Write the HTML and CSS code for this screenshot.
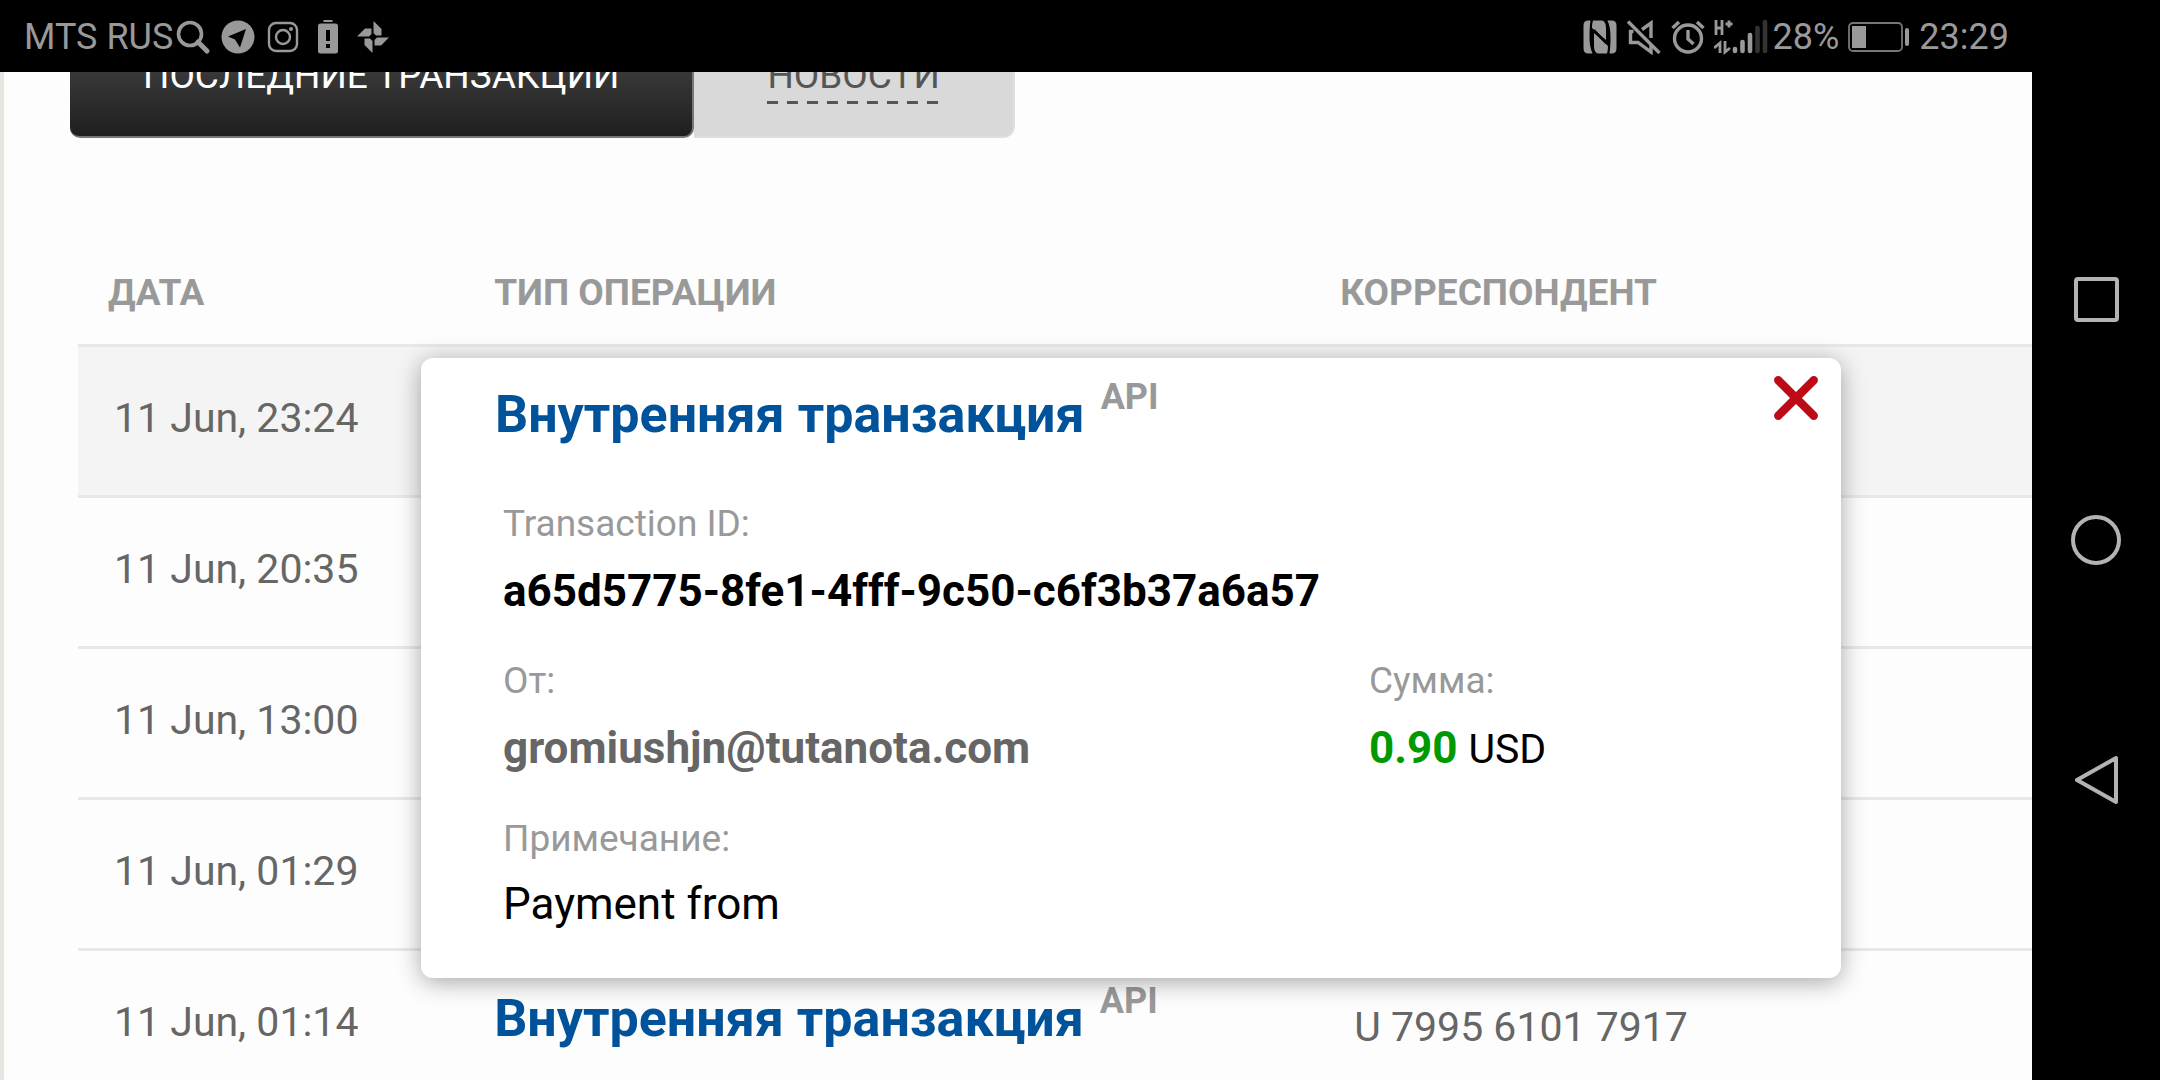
FILE: index.html
```html
<!DOCTYPE html>
<html lang="ru">
<head>
<meta charset="UTF-8">
<meta name="viewport" content="width=device-width, initial-scale=1.0">
<title>Последние транзакции</title>
<link rel="stylesheet" href="styles.css">
</head>
<body>
<div class="screen">
    <header class="status">
        <span>MTS RUS</span>
        <div class="icons left">
            <svg class="icon" viewBox="0 0 36 36"><circle cx="15" cy="15" r="11.5" fill="none" stroke="#999" stroke-width="3.6"/><path d="M23 23L32 32" stroke="#999" stroke-width="5" stroke-linecap="round"/></svg>
            <svg class="icon" viewBox="0 0 36 36"><circle cx="18" cy="18" r="16.5" fill="#999"/><path d="M26 10L8 17.500L15 20.500L20 28.500Z" fill="#000"/></svg>
            <svg class="icon" viewBox="0 0 36 36"><g fill="none" stroke="#999" stroke-width="2.400"><rect x="4" y="4" width="28" height="28" rx="7"/><circle cx="18" cy="18" r="7"/></g><circle cx="26" cy="10" r="2" fill="#999"/></svg>
            <svg class="icon" viewBox="0 0 36 36"><path d="M13.500 1h9v2h-9zM10.500 4.500h15q2.500 0 2.500 2.500v25q0 2.500-2.500 2.500h-15q-2.500 0-2.500-2.500v-25q0-2.500 2.500-2.500z" fill="#999"/><path d="M16 11h4v11h-4zM16 25h4v4h-4z" fill="#000"/></svg>
            <svg class="icon" viewBox="0 0 36 36"><g fill="#999"><path id="leaf" d="M18.500 2L26.500 10V16.500H21L18.500 14Z"/><use href="#leaf" transform="rotate(90 18 18)"/><use href="#leaf" transform="rotate(180 18 18)"/><use href="#leaf" transform="rotate(270 18 18)"/></g></svg>
        </div>
        <div class="icons right">
            <svg class="icon" viewBox="0 0 36 36"><g fill="#999"><path d="M6.500 1.500H8.500Q7.500 8 7.500 18T10.500 34.500H6.500Q1.500 34.500 1.500 29.500V6.500Q1.500 1.500 6.500 1.500Z"/><path d="M29.500 34.500H27.500Q28.500 28 28.500 18T25.500 1.500H29.500Q34.500 1.500 34.500 6.500V29.500Q34.500 34.500 29.500 34.500Z"/><path d="M11 1.500H20Q24 2.500 24 9V21L10 9Q10 4 11 1.500Z"/><path d="M25 34.500H16Q12 33.500 12 27V14L26 27Q26 32 25 34.500Z"/></g><path d="M12 11L24 24" stroke="#000" stroke-width="2"/></svg>
            <svg class="icon" viewBox="0 0 36 36"><g fill="none" stroke="#999" stroke-width="3.400"><path d="M2 2.500L33.500 34"/><path d="M7.500 12.500H4.500V23.500H12L25 33V25M16 10.500L25 4V19"/></g></svg>
            <svg class="icon" viewBox="0 0 36 36"><g fill="none" stroke="#999" stroke-width="3.400"><circle cx="18" cy="19.500" r="13.500"/><path d="M18 11V20L23.500 25M2.500 9L9 3M27 3L33.500 9"/></g></svg>
            <svg class="signal" viewBox="0 0 54 36"><g fill="none" stroke="#999" stroke-width="2.800"><path d="M2 1V16M8 1V16M2 9H8M11.500 5H18.500M15 1.500V8.500M0 29L6 24V34M11 22V33L16 29"/></g><g stroke-width="4.600" stroke-linecap="round"><path d="M21 30V32M28.500 23V32M36 16V32" stroke="#999"/><path d="M43.500 9V32M51 3V32" stroke="#333"/></g></svg>
        </div>
        <span>28%</span>
        <svg class="battery" viewBox="0 0 62 30"><rect x="1" y="1" width="53" height="28" rx="4" fill="none" stroke="#777" stroke-width="1.800"/><rect x="4" y="4" width="14" height="22" fill="#999"/><rect x="57" y="6" width="4" height="18" rx="2" fill="#999"/></svg>
        <time>23:29</time>
    </header>

    <main class="page">
        <nav class="tabs">
            <a class="tab active" href="#">ПОСЛЕДНИЕ ТРАНЗАКЦИИ</a>
            <a class="tab" href="#"><span class="dashed">НОВОСТИ</span></a>
        </nav>
        <table class="operations">
            <thead>
                <tr><th class="date">ДАТА</th><th class="type">ТИП ОПЕРАЦИИ</th><th>КОРРЕСПОНДЕНТ</th></tr>
            </thead>
            <tbody>
                <tr class="selected"><td>11 Jun, 23:24</td><td></td><td></td></tr>
                <tr><td>11 Jun, 20:35</td><td></td><td></td></tr>
                <tr><td>11 Jun, 13:00</td><td></td><td></td></tr>
                <tr><td>11 Jun, 01:29</td><td></td><td></td></tr>
                <tr><td>11 Jun, 01:14</td><td class="operation"><a class="title" href="#">Внутренняя транзакция</a><sup>API</sup></td><td class="account">U 7995 6101 7917</td></tr>
            </tbody>
        </table>

        <section class="popup">
            <button class="close" aria-label="Закрыть"><svg viewBox="0 0 44 44"><path d="M5 5L39 39M39 5L5 39" stroke="#bd0a17" stroke-width="8" stroke-linecap="round"/></svg></button>
            <h2><a class="title" href="#">Внутренняя транзакция</a><sup>API</sup></h2>
            <dl class="details">
                <div class="wide"><dt>Transaction ID:</dt><dd><b>a65d5775-8fe1-4fff-9c50-c6f3b37a6a57</b></dd></div>
                <div><dt>От:</dt><dd class="sender"><b>gromiushjn@tutanota.com</b></dd></div>
                <div><dt>Сумма:</dt><dd><b class="amount">0.90</b> <span class="currency">USD</span></dd></div>
                <div class="wide note"><dt>Примечание:</dt><dd>Payment from</dd></div>
            </dl>
        </section>
    </main>

    <aside class="keys">
        <button aria-label="Недавние"><svg viewBox="0 0 52 52"><rect x="6" y="5" width="41" height="41" rx="2" fill="none" stroke="#b3b3b3" stroke-width="4"/></svg></button>
        <button aria-label="Домой"><svg viewBox="0 0 52 52"><circle cx="26" cy="26" r="23" fill="none" stroke="#b3b3b3" stroke-width="4"/></svg></button>
        <button aria-label="Назад"><svg viewBox="0 0 52 52"><path d="M46 4V48L7 26Z" fill="none" stroke="#b3b3b3" stroke-width="4" stroke-linejoin="round"/></svg></button>
    </aside>
</div>
</body>
</html>
```
FILE: styles.css
```css
*{margin:0;padding:0;box-sizing:border-box;}
body
{
    font-family: Roboto, "Liberation Sans", sans-serif;
    font-size: 41px;
    line-height: 48px;
    color: #000;
    background: #000;
}
a
{
    text-decoration: none;
}
button
{
    border: 0;
    background: none;
}
svg
{
    display: block;
}
.screen
{
    display: grid;
    grid-template-columns: 1fr 128px;
    grid-template-rows: 72px 1fr;
    height: 100vh;
    overflow: hidden;
}

/* status bar */
.status
{
    display: flex;
    align-items: center;
    padding: 2px 23px 0 24px;
    font-size: 36px;
    color: #999;
}
.icons
{
    display: flex;
    gap: 8px;
}
.icons.left
{
    gap: 9px;
    margin-left: 2px;
}
.icons.right
{
    margin-left: auto;
    margin-right: 5px;
}
.icon
{
    width: 36px;
    height: 36px;
}
.signal
{
    width: 54px;
    height: 36px;
}
.battery
{
    width: 62px;
    height: 30px;
    margin: 0 9px;
}

/* page */
.page
{
    position: relative;
    min-width: 0;
    overflow: hidden;
    border-left: 4px solid #e6e6e0;
    background: #fdfdfd;
}
.tabs
{
    display: flex;
    margin: -46px 0 134px 66px;
}
.tab
{
    padding: 29px 73px 32px;
    border: 2px solid #dedede;
    border-top: 0;
    border-left: 0;
    border-radius: 0 0 12px 0;
    font-size: 37px;
    line-height: 42px;
    color: #555;
    background: #d9d9d9;
}
.tab.active
{
    border-color: #777;
    border-radius: 0 0 10px 10px;
    color: #fff;
    background: linear-gradient(#4a4a4a, #1f1f1f);
}
.dashed
{
    display: block;
    padding-bottom: 7px;
    background: repeating-linear-gradient(90deg, #555 0 11px, transparent 11px 20px) bottom / 100% 3px no-repeat;
}
.operations
{
    width: calc(100% - 74px);
    margin-left: 74px;
    border-collapse: collapse;
    table-layout: fixed;
}
.operations th
{
    padding: 0 0 30px;
    font-size: 37px;
    line-height: 42px;
    text-align: left;
    color: #999;
}
.operations .date
{
    width: 21.3%;
    padding-left: 30px;
}
.type
{
    width: 43.3%;
}
.operations td
{
    height: 151px;
    padding: 47px 0 0 36px;
    border-top: 3px solid #e8e8e8;
    vertical-align: top;
    white-space: nowrap;
    color: #666;
}
.selected
{
    background: #f4f4f4;
}
.operations .operation
{
    padding: 36px 0 0;
    line-height: 64px;
}
.operations .account
{
    padding: 52px 0 0 14px;
}
.title
{
    font-size: 52px;
    font-weight: bold;
    color: #00529b;
}
sup
{
    margin-left: 16px;
    font-size: 36px;
    font-weight: bold;
    line-height: 0;
    vertical-align: 23px;
    color: #999;
}

/* transaction details */
.popup
{
    position: absolute;
    top: 286px;
    left: 417px;
    right: 191px;
    padding: 21px 74px 50px;
    border-radius: 12px;
    background: #fff;
    box-shadow: 0 4px 24px rgba(0, 0, 0, .35);
}
.popup h2
{
    line-height: 64px;
}
.close
{
    position: absolute;
    top: 17px;
    right: 22px;
    width: 46px;
    height: 46px;
}
.details
{
    display: grid;
    grid-template-columns: 866px 1fr;
    row-gap: 45px;
    margin: 56px 0 0 8px;
    font-size: 44px;
}
.wide
{
    grid-column: 1 / 3;
}
.details dt
{
    margin-bottom: 22px;
    font-size: 37px;
    line-height: 42px;
    color: #999;
}
.note dt
{
    margin-bottom: 20px;
}
.sender
{
    color: #666;
}
.amount
{
    color: #090;
}
.currency
{
    font-size: 41px;
}

/* navigation keys */
.keys
{
    grid-column: 2;
    grid-row: 1 / 3;
    display: flex;
    flex-direction: column;
    align-items: center;
    justify-content: center;
    gap: 188px;
}
.keys button
{
    width: 52px;
    height: 52px;
}
```
